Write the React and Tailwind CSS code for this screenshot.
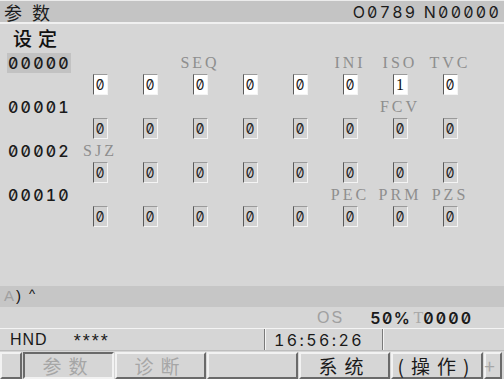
import React from "react";

const num = "font-['Inter',sans-serif] slashed-zero tabular-nums";

const params = [
  { no: "00000", bits: ["", "", "SEQ", "", "", "INI", "ISO", "TVC"], vals: ["0", "0", "0", "0", "0", "0", "1", "0"], active: true },
  { no: "00001", bits: ["", "", "", "", "", "", "FCV", ""], vals: ["0", "0", "0", "0", "0", "0", "0", "0"] },
  { no: "00002", bits: ["SJZ", "", "", "", "", "", "", ""], vals: ["0", "0", "0", "0", "0", "0", "0", "0"] },
  { no: "00010", bits: ["", "", "", "", "", "PEC", "PRM", "PZS"], vals: ["0", "0", "0", "0", "0", "0", "0", "0"] },
];

const ParamBlock = ({ p }) => (
  <div className="flex flex-col">
    <div className="flex h-[22px] items-center">
      <div
        className={`ml-[7px] w-[64px] h-[20px] flex items-center pl-[1px] text-[16px] font-medium tracking-[2.2px] text-[#1a1a1a] ${num} ${p.active ? "bg-[#c2c2c2]" : ""}`}
      >
        {p.no}
      </div>
      <div className="ml-[4px] grid grid-cols-8 w-[400px]">
        {p.bits.map((b, i) => (
          <div
            key={i}
            className="text-center text-[16px] tracking-[3px] text-[#8e8e8e] font-['Liberation_Serif',serif]"
          >
            {b}
          </div>
        ))}
      </div>
    </div>
    <div className="flex h-[22px] items-start pl-[75px]">
      <div className="grid grid-cols-8 w-[400px]">
        {p.vals.map((v, i) => (
          <div key={i} className="flex justify-center">
            <div
              className={`w-[15px] h-[21px] flex items-center justify-center border border-t-[#9a9a9a] border-l-[#5a5a5a] border-r-[#f4f4f4] border-b-[#f4f4f4] ${p.active ? "bg-white" : "bg-[#d2d2d2]"}`}
            >
              {v === "1" ? (
                <span className="text-[16px] text-[#111] font-['Liberation_Serif',serif]">1</span>
              ) : (
                <span className={`text-[14px] text-[#222] ${num}`}>0</span>
              )}
            </div>
          </div>
        ))}
      </div>
    </div>
  </div>
);

const SoftKey = ({ label, w, sunken, dim }) => (
  <div
    className={`h-[27px] flex items-center justify-center border-2 ${sunken ? "border-t-[#6a6a6a] border-l-[#6a6a6a] border-r-[#f2f2f2] border-b-[#f2f2f2]" : "border-t-[#f2f2f2] border-l-[#f2f2f2] border-r-[#6a6a6a] border-b-[#6a6a6a]"} ${dim ? "text-[#a6a6a6]" : "text-[#1a1a1a]"} text-[19px] leading-[23px] tracking-[7px] font-['Noto_Sans_CJK_SC',sans-serif]`}
    style={{ width: w }}
  >
    {label}
  </div>
);

export default function App() {
  return (
    <div className="w-[504px] h-[379px] overflow-hidden bg-[#d6d6d6] flex flex-col font-['Liberation_Sans','Noto_Sans_CJK_SC',sans-serif]">
      {/* title bar */}
      <div className="h-[24px] shrink-0 bg-[#c4c4c4] border-t border-t-[#ececec] border-b-2 border-b-[#f0f0f0] flex items-center justify-between">
        <span className="pl-[4px] text-[18px] leading-[20px] tracking-[10px] text-[#1c1c1c] font-['Noto_Sans_CJK_SC',sans-serif]">
          参数
        </span>
        <span className={`pr-[3px] text-[16px] tracking-[2.2px] text-[#1c1c1c] ${num}`}>
          O0789 N00000
        </span>
      </div>

      <div className="h-[28px] shrink-0 flex items-center pl-[13px] text-[19px] tracking-[6px] text-[#111] font-['Noto_Sans_CJK_SC',sans-serif] font-medium">
        设定
      </div>

      <div className="flex-1 flex flex-col">
        {params.map((p) => (
          <ParamBlock key={p.no} p={p} />
        ))}
      </div>

      {/* input line */}
      <div className="h-[21px] shrink-0 bg-[#c6c6c6] flex items-center pl-[4px] text-[15px] text-[#111]">
        <span className="text-[#a0a0a0]">A</span>
        <span className="ml-[2px]">)</span>
        <span className="ml-[8px] text-[13px] -mt-[6px]">^</span>
      </div>

      <div className="h-[21px] shrink-0 flex items-center text-[16px]">
        <span className="ml-[317px] text-[#a0a0a0] tracking-[2px]">OS</span>
        <span className={`ml-[26px] text-[#1a1a1a] font-semibold tracking-[1.5px] ${num}`}>50%</span>
        <span className="ml-[2px] text-[#a8a8a8] font-['Liberation_Serif',serif]">T</span>
        <span className={`text-[#1a1a1a] font-semibold tracking-[2.2px] ${num}`}>0000</span>
      </div>

      {/* status row */}
      <div className="h-[22px] shrink-0 flex border-t border-t-[#f4f4f4]">
        <div className="w-[265px] flex items-center pl-[10px] border-r border-r-[#7a7a7a] text-[16px] text-[#1a1a1a]">
          <span className="tracking-[1px]">HND</span>
          <span className="ml-[26px] tracking-[2px] text-[18px] mt-[3px]">****</span>
        </div>
        <div className={`w-[118px] flex items-center pl-[8px] border-l border-l-[#f4f4f4] border-r border-r-[#7a7a7a] text-[16px] tracking-[2.4px] text-[#1a1a1a] ${num}`}>
          16:56:26
        </div>
        <div className="flex-1 border-l border-l-[#f4f4f4]"></div>
      </div>

      {/* soft keys */}
      <div className="h-[29px] shrink-0 flex items-center gap-[1px] border-t border-t-[#bdbdbd]">
        <SoftKey label="" w={22} />
        <SoftKey label="参数" w={91} sunken dim />
        <SoftKey label="诊断" w={91} dim />
        <SoftKey label="" w={91} />
        <SoftKey label="系统" w={91} />
        <SoftKey label="(操作)" w={92} />
        <SoftKey label="+" w={18} dim />
      </div>
    </div>
  );
}
